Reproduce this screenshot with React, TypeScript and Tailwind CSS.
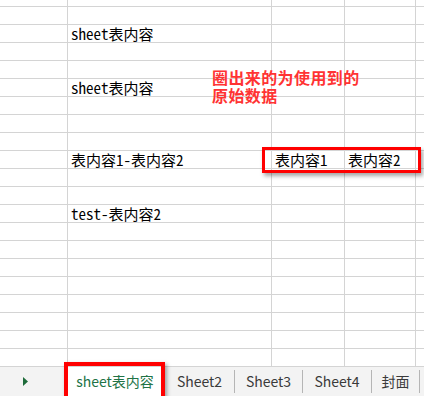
import React from "react";

const cellFont = {
  fontFamily: '"Noto Sans Mono CJK SC", "Noto Sans CJK SC", "Liberation Mono", monospace',
};

type RowData = { b?: string; c?: string; d?: string };

const rows: RowData[] = Array.from({ length: 20 }, () => ({}));
rows[1] = { b: "sheet表内容" };
rows[4] = { b: "sheet表内容" };
rows[8] = { b: "表内容1-表内容2", c: "表内容1", d: "表内容2" };
rows[11] = { b: "test-表内容2" };

function Row({ data, h }: { data: RowData; h: string }) {
  const cell = "border-r border-[#d4d4d4] pl-[3px] flex items-end overflow-visible whitespace-nowrap";
  return (
    <div className={`flex border-b border-[#d4d4d4] ${h}`}>
      <div className={`${cell} w-[68px] shrink-0`} />
      <div className={`${cell} w-[204px] shrink-0`}>
        <span className="text-[15px] leading-[17px] text-black">{data.b}</span>
      </div>
      <div className={`${cell} w-[73px] shrink-0`}>
        <span className="text-[15px] leading-[17px] text-black">{data.c}</span>
      </div>
      <div className={`${cell} w-[71px] shrink-0`}>
        <span className="text-[15px] leading-[17px] text-black">{data.d}</span>
      </div>
      <div className="flex-1" />
    </div>
  );
}

export default function App() {
  return (
    <div className="relative w-[424px] h-[396px] bg-white overflow-hidden">
      <div style={cellFont}>
        <Row data={{}} h="h-[7px]" />
        {rows.map((r, i) => (
          <Row key={i} data={r} h="h-[18px]" />
        ))}
      </div>

      {/* tab bar */}
      <div
        className="flex h-[29px] bg-[#f3f3f3] items-stretch text-[14px] text-[#3a3a3a]"
        style={{ fontFamily: '"Noto Sans CJK SC", "Open Sans", sans-serif' }}
      >
        <div className="w-[65px] flex items-center pl-[23px]">
          <svg width="5" height="9" viewBox="0 0 5 9">
            <path d="M0 0 L5 4.5 L0 9 Z" fill="#1e6b3a" />
          </svg>
        </div>
        <div className="w-[100px] flex items-center justify-center bg-white text-[#217346]">
          sheet表内容
        </div>
        <div className="w-[70px] flex items-center justify-center border-r border-[#b5b5b5] my-[3px]">Sheet2</div>
        <div className="w-[68px] flex items-center justify-center border-r border-[#b5b5b5] my-[3px]">Sheet3</div>
        <div className="w-[69px] flex items-center justify-center border-r border-[#b5b5b5] my-[3px]">Sheet4</div>
        <div className="w-[48px] flex items-center justify-center border-r border-[#b5b5b5] my-[3px]">封面</div>
      </div>

      {/* red annotation text */}
      <div
        className="absolute left-[212px] top-[68px] text-[16px] leading-[18px] tracking-[0.4px] text-[#ff3333] font-bold"
        style={{ fontFamily: '"Noto Sans CJK SC", sans-serif' }}
      >
        <div>圈出来的为使用到的</div>
        <div>原始数据</div>
      </div>

      {/* red box around cells */}
      <div className="absolute left-[262px] top-[147px] w-[159px] h-[26px] border-[3px] border-[#ff0000] shadow-[2px_3px_4px_rgba(0,0,0,0.35)]" />

      {/* red box around active tab */}
      <div className="absolute left-[64px] top-[362px] w-[101px] h-[40px] border-[4px] border-[#ff0000] shadow-[2px_2px_4px_rgba(0,0,0,0.35)]" />
    </div>
  );
}
